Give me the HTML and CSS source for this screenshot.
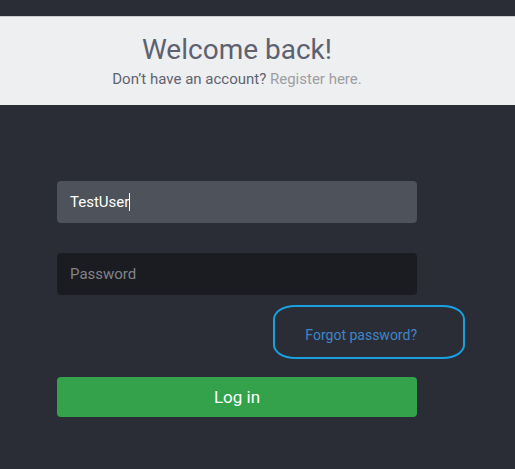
FILE: index.html
```html
<!DOCTYPE html>
<html lang="en">

<head>
    <meta charset="UTF-8">
    <meta name="viewport" content="width=device-width, initial-scale=1.0">
    <title>Log in</title>
    <link rel="stylesheet" href="styles.css">
</head>

<body>
    <div class="topbar"></div>
    <header class="hero">
        <div class="hero-inner">
            <h1>Welcome back!</h1>
            <p>Don’t have an account? <a href="#">Register here.</a></p>
        </div>
    </header>
    <div class="page">
        <form class="login">
            <div class="field filled">TestUser<span class="caret"></span></div>
            <div class="field empty">Password</div>
            <div class="forgot">
                <a href="#">Forgot password?</a>
                <span class="mark"></span>
            </div>
            <button type="submit">Log in</button>
        </form>
    </div>
</body>

</html>
```
FILE: styles.css
```css
body {
    margin: 0;
    background-color: #2a2d35;
    font-family: Roboto, "Liberation Sans", sans-serif;
}

.page {
    width: 474px;
}

.topbar {
    height: 16px;
    border-bottom: 1px solid #c9cbce;
}

.hero {
    background-color: #eeeff1;
    height: 88px;
    padding-top: 16px;
    box-sizing: border-box;
}

.hero-inner {
    width: 474px;
    text-align: center;
}

.hero h1 {
    margin: 0;
    font-size: 28px;
    font-weight: 400;
    color: #5d6170;
    line-height: 34px;
}

.hero p {
    margin: 3px 0 0;
    font-size: 15px;
    color: #5f636f;
}

.hero a {
    color: #9c9ea2;
    text-decoration: none;
}

.login {
    width: 360px;
    margin: 76px auto 0;
    display: flex;
    flex-direction: column;
}

.field {
    height: 42px;
    border-radius: 4px;
    padding: 0 13px;
    display: flex;
    align-items: center;
    font-size: 15px;
}

.field.filled {
    background-color: #4e525b;
    color: #fff;
    margin-bottom: 30px;
}

.field.empty {
    background-color: #1b1c21;
    color: #80838a;
}

.caret {
    display: inline-block;
    width: 1px;
    height: 18px;
    background-color: #fff;
}

.forgot {
    position: relative;
    height: 82px;
    display: flex;
    justify-content: flex-end;
    align-items: center;
    padding-bottom: 2px;
    box-sizing: border-box;
    font-size: 14px;
}

.forgot a {
    color: #3f86c8;
    text-decoration: none;
}

.mark {
    position: absolute;
    left: 216px;
    top: 10px;
    width: 188px;
    height: 50px;
    border: 2.5px solid #1aa0df;
    border-radius: 22px / 14px;
}

button {
    height: 40px;
    border: none;
    border-radius: 4px;
    background-color: #33a24b;
    color: #fff;
    font-family: inherit;
    font-size: 17px;
    cursor: pointer;
}
```
